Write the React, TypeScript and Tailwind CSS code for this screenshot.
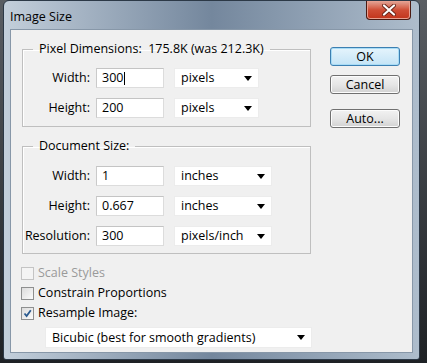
import React from "react";

const font = { fontFamily: '"Open Sans", "Liberation Sans", Arial, sans-serif' };

function Arrow() {
  return (
    <svg width="8" height="5" viewBox="0 0 8 5" className="shrink-0">
      <path d="M0 0 H8 L4 5 Z" fill="#000" />
    </svg>
  );
}

interface FieldRowProps {
  label: string;
  value: string;
  unit: string;
  selectWidth: string;
  caret?: boolean;
}

function FieldRow({ label, value, unit, selectWidth, caret }: FieldRowProps) {
  return (
    <div className="flex items-center h-[20px]">
      <div className="w-[68px] text-right pr-[1px]">{label}</div>
      <div className="ml-[5px] w-[68px] h-[20px] bg-white border border-[#dcdcdc] border-t-[#c4c4c4] border-l-[#cacaca] flex items-center pl-[5px]">
        <span>{value}</span>
        {caret && <span className="w-px h-[13px] bg-black ml-[1px]" />}
      </div>
      <div
        className={
          "ml-[10px] h-[20px] bg-white border border-[#ececec] flex items-center justify-between pl-[6px] pr-[6px] " +
          selectWidth
        }
      >
        <span>{unit}</span>
        <Arrow />
      </div>
    </div>
  );
}

function Checkbox({
  label,
  checked,
  disabled,
}: {
  label: string;
  checked?: boolean;
  disabled?: boolean;
}) {
  return (
    <div className="flex items-center h-[20px]">
      <div
        className={
          "w-[13px] h-[13px] border flex items-center justify-center " +
          (disabled
            ? "border-[#c4c4c4] bg-[#f4f4f4]"
            : "border-[#8e8f8f] bg-gradient-to-br from-[#dcdcdc] to-[#fbfbfb]")
        }
      >
        {checked && (
          <svg width="9" height="9" viewBox="0 0 9 9">
            <path
              d="M1.5 4.5 L3.6 7 L7.8 1.2"
              fill="none"
              stroke="#2a5a8f"
              strokeWidth="1.8"
            />
          </svg>
        )}
      </div>
      <span className={"ml-[4px] " + (disabled ? "text-[#9a9a9a]" : "text-black")}>
        {label}
      </span>
    </div>
  );
}

function Button({ label, primary }: { label: string; primary?: boolean }) {
  return (
    <div
      className={
        "w-[70px] h-[19px] rounded-[3px] border flex items-center justify-center " +
        (primary
          ? "border-[#3c7fb1] bg-gradient-to-b from-[#e5f4fc] to-[#c4e4f6] shadow-[inset_0_0_0_1px_#a8dcf6]"
          : "border-[#707070] bg-gradient-to-b from-[#f2f2f2] via-[#e6e6e6] to-[#d2d2d2] shadow-[inset_0_0_0_1px_#fcfcfc]")
      }
    >
      {label}
    </div>
  );
}

export default function App() {
  return (
    <div
      className="w-[427px] h-[363px] overflow-hidden bg-gradient-to-b from-[#5a5e63] to-[#1e2125] pl-[3px] text-[12.5px] text-black leading-[16px]"
      style={font}
    >
      <div className="w-[417px] h-[360px] rounded-t-[6px] rounded-b-[3px] border border-[#2c3947] bg-gradient-to-r from-[#c3cfdb] via-[#74879d] to-[#aebdcc] flex flex-col">
        <div className="h-[28px] flex justify-between">
          <div className="pl-[6px] pt-[8px] text-black">Image Size</div>
          <div className="mr-[8px] w-[45px] h-[19px] rounded-b-[4px] border border-t-0 border-[#4a1a12] bg-gradient-to-b from-[#e2a597] via-[#cf4d35] to-[#c2331a] shadow-[inset_0_0_0_1px_#e8a090] flex items-center justify-center">
            <svg width="14" height="12" viewBox="0 0 14 12">
              <path
                d="M2 1.5 L12 10.5 M12 1.5 L2 10.5"
                stroke="#6a2418"
                strokeWidth="4"
                strokeLinecap="round"
              />
              <path
                d="M2 1.5 L12 10.5 M12 1.5 L2 10.5"
                stroke="#fff"
                strokeWidth="2.2"
                strokeLinecap="round"
              />
            </svg>
          </div>
        </div>
        <div className="mx-[6px] h-[324px] border border-[#8797a8] bg-[#f0f0f0] pl-[11px] pt-[11px]">
          <div className="flex gap-[19px]">
            <div className="w-[289px]">
              <fieldset className="border border-[#bfbfbf] shadow-[inset_1px_1px_0_#ffffff] pb-[8px]">
                <legend className="ml-[10px] px-[6px]">
                  Pixel Dimensions:&nbsp; 175.8K (was 212.3K)
                </legend>
                <div className="mt-[11px] flex flex-col gap-[10px]">
                  <FieldRow label="Width:" value="300" unit="pixels" selectWidth="w-[85px]" caret />
                  <FieldRow label="Height:" value="200" unit="pixels" selectWidth="w-[85px]" />
                </div>
              </fieldset>
              <fieldset className="mt-[11px] border border-[#bfbfbf] shadow-[inset_1px_1px_0_#ffffff] pb-[7px]">
                <legend className="ml-[10px] px-[6px]">Document Size:</legend>
                <div className="mt-[12px] flex flex-col gap-[10px]">
                  <FieldRow label="Width:" value="1" unit="inches" selectWidth="w-[98px]" />
                  <FieldRow label="Height:" value="0.667" unit="inches" selectWidth="w-[98px]" />
                  <FieldRow label="Resolution:" value="300" unit="pixels/inch" selectWidth="w-[98px]" />
                </div>
              </fieldset>
            </div>
            <div className="flex flex-col pt-[6px]">
              <Button label="OK" primary />
              <div className="mt-[9px]">
                <Button label="Cancel" />
              </div>
              <div className="mt-[15px]">
                <Button label="Auto..." />
              </div>
            </div>
          </div>
          <div className="mt-[9px] ml-[-1px] flex flex-col">
            <Checkbox label="Scale Styles" disabled />
            <Checkbox label="Constrain Proportions" />
            <Checkbox label="Resample Image:" checked />
          </div>
          <div className="mt-[4px] ml-[23px] w-[267px] h-[21px] bg-white border border-[#ececec] flex items-center justify-between pl-[6px] pr-[6px]">
            <span>Bicubic (best for smooth gradients)</span>
            <Arrow />
          </div>
        </div>
      </div>
    </div>
  );
}
